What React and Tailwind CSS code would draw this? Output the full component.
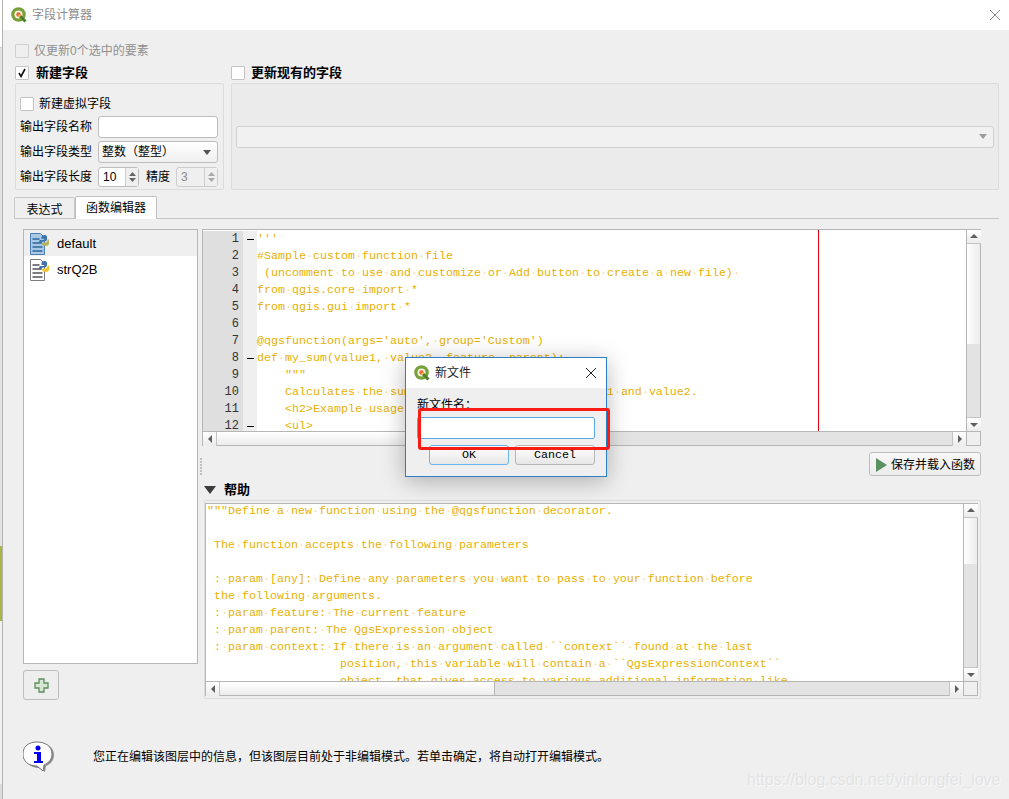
const cjk = '"Liberation Sans", "Noto Sans CJK SC", sans-serif';

const codeLines = [
  "'''",
  '#Sample custom function file',
  ' (uncomment to use and customize or Add button to create a new file) ',
  'from qgis.core import *',
  'from qgis.gui import *',
  '',
  "@qgsfunction(args='auto', group='Custom')",
  'def my_sum(value1, value2, feature, parent):',
  '    """',
  '    Calculates the sum of the two parameters value1 and value2.',
  '    <h2>Example usage:</h2>',
  '    <ul>',
];

const helpLines = [
  '"""Define a new function using the @qgsfunction decorator.',
  '',
  ' The function accepts the following parameters',
  '',
  ' : param [any]: Define any parameters you want to pass to your function before',
  ' the following arguments.',
  ' : param feature: The current feature',
  ' : param parent: The QgsExpression object',
  ' : param context: If there is an argument called ``context`` found at the last',
  '                   position, this variable will contain a ``QgsExpressionContext``',
  '                   object, that gives access to various additional information like',
];

// interior spaces show as faint dots, the editor has "show whitespace" on
function CodeLine({ text }) {
  const lead = text.match(/^ */)[0];
  const words = text.slice(lead.length).split(' ');
  return (
    <div className="h-[17px]">
      {lead}
      {words.map((w, i) => (
        <span key={i}>
          {i > 0 && <span className="text-[#f3dc94]">·</span>}
          {w}
        </span>
      ))}
    </div>
  );
}

function QgisLogo({ size = 16 }) {
  return (
    <svg width={size} height={size} viewBox="0 0 16 16" className="shrink-0">
      <circle cx="7.500" cy="7.500" r="5.700" fill="#f4f1dc" stroke="#76a13a" strokeWidth="3.200" />
      <path d="M9 9l5.500 5.500" stroke="#4f7f2a" strokeWidth="3" />
      <circle cx="7.500" cy="7.500" r="2.200" fill="#e8663a" />
      <circle cx="8.500" cy="8.500" r="1.100" fill="#f4d03f" />
    </svg>
  );
}

function CheckBox({ checked, disabled }) {
  return (
    <span className={`flex h-[14px] w-[14px] shrink-0 items-center justify-center rounded-[1px] border ${disabled ? 'border-[#cfcfcf] bg-[#efefef]' : 'border-[#c4c4c4] bg-white'}`}>
      {checked && (
        <svg width="10" height="10" viewBox="0 0 10 10">
          <path d="M2 5l2 3.500L8 1" fill="none" stroke="#111" strokeWidth="1.600" />
        </svg>
      )}
    </span>
  );
}

function Arrow({ dir, color = '#5f5f5f' }) {
  const paths = {
    up: 'M1 6l4-4 4 4z',
    down: 'M1 3l4 4 4-4z',
    left: 'M7 1L3 5l4 4z',
    right: 'M3 1l4 4-4 4z',
  };
  return (
    <svg width="10" height="10" viewBox="0 0 10 10">
      <path d={paths[dir]} fill={color} />
    </svg>
  );
}

function ScrollBtn({ dir, className = '' }) {
  return (
    <div className={`flex h-[14px] w-[14px] shrink-0 items-center justify-center bg-gradient-to-b from-white to-[#ececec] ${className}`}>
      <Arrow dir={dir} />
    </div>
  );
}

function SpinBox({ value, disabled, width }) {
  return (
    <div className={`flex h-[20px] ${width} items-stretch rounded-[3px] border ${disabled ? 'border-[#cdcdcd] text-[#8a8a8a]' : 'border-[#bdbdbd] bg-white text-black'}`}>
      <span className="flex-1 pl-[4px] text-[12px] leading-[18px]">{value}</span>
      <div className="flex w-[13px] flex-col items-center justify-center border-l border-[#cdcdcd] bg-[#efefef]">
        <svg width="9" height="14" viewBox="0 0 9 14">
          <path d="M1 6l3.500-4L8 6zM1 8l3.500 4L8 8z" fill={disabled ? '#a8a8a8' : '#666'} />
        </svg>
      </div>
    </div>
  );
}

function PyFileIcon({ blue }) {
  const line = blue ? '#4a7fb0' : '#7d7d7d';
  return (
    <svg width="21" height="22" viewBox="0 0 21 22" className="shrink-0">
      <path d="M.5.5h10l4 4v17H.5z" fill={blue ? '#a9c8e6' : '#fff'} stroke={line} />
      <path d="M2.500 6h7M2.500 10h9M2.500 14h10M2.500 18h10" stroke={line} strokeWidth="1.800" />
      <path d="M15 2c-3 0-3.500 1-3.500 3v1H15v1h-4.500C9 7 9 9 9 10.500h2.500C11.500 9 12.500 8.500 14 8.500s3-.5 3-2.500V4C17 3 16 2 15 2z" fill="#3a75ad" />
      <path d="M15.500 13c3 0 3.500-1 3.500-3V6.500h-1.500c0 2.500-1 3-3 3s-2.500.5-2.500 1.500 1.500 2 3.500 2z" fill={blue ? '#b5b45a' : '#f2c431'} />
    </svg>
  );
}

function CodeEditor() {
  return (
    <div className="flex h-[217px] flex-col border border-[#b6b6b6] bg-white">
      <div className="flex h-[201px]">
        <div className="relative flex min-w-0 flex-1 overflow-hidden pt-[1px]">
          <div className="w-[40px] shrink-0 bg-[#dfdfdf] pr-[4px] text-right font-['Liberation_Mono',monospace] text-[12px] leading-[17px] text-[#333]">
            {codeLines.map((_, i) => (
              <div key={i} className="h-[17px]">{i + 1}</div>
            ))}
          </div>
          <div className="w-[14px] shrink-0 bg-[#efefef]">
            {codeLines.map((_, i) => (
              <div key={i} className="flex h-[17px] items-center justify-center">
                {(i === 0 || i === 7 || i === 11) && <span className="h-[1px] w-[7px] bg-black" />}
              </div>
            ))}
          </div>
          <div className="flex-1 whitespace-pre font-['Liberation_Mono',monospace] text-[11.67px] leading-[17px] text-[#e8b000]">
            {codeLines.map((l, i) => (
              <CodeLine key={i} text={l} />
            ))}
          </div>
          {/* long line marker */}
          <div className="absolute top-0 bottom-0 left-[615px] w-[1px] bg-red-600" />
        </div>
        <div className="flex w-[14px] shrink-0 flex-col border-l border-[#b6b6b6]">
          <ScrollBtn dir="up" className="border-b border-[#c4c4c4]" />
          <div className="h-[100px] bg-gradient-to-r from-white to-[#ececec]" />
          <div className="flex-1 bg-[#e3e3e3]" />
          <ScrollBtn dir="down" className="border-t border-[#c4c4c4]" />
        </div>
      </div>
      <div className="flex h-[14px] border-t border-[#b6b6b6]">
        <ScrollBtn dir="left" className="border-r border-[#c4c4c4]" />
        <div className="w-[276px] bg-gradient-to-b from-white to-[#ececec]" />
        <div className="flex-1 bg-[#e3e3e3]" />
        <ScrollBtn dir="right" className="border-l border-[#c4c4c4]" />
        <div className="w-[14px] border-l border-[#b6b6b6] bg-[#efefef]" />
      </div>
    </div>
  );
}

function HelpBox() {
  return (
    <div className="ml-[2px] h-[199px] rounded-[1px] border border-[#dcdcdc] pt-[2px] pr-[2px]">
      <div className="flex h-[193px] flex-col border border-[#b6b6b6] bg-white">
        <div className="flex h-[177px]">
          <div className="min-w-0 flex-1 overflow-hidden whitespace-pre pl-[1px] font-['Liberation_Mono',monospace] text-[11.67px] leading-[17px] text-[#e8b000]">
            <div className="-mt-[1px]">
              {helpLines.map((l, i) => (
                <CodeLine key={i} text={l} />
              ))}
            </div>
          </div>
          <div className="flex w-[14px] shrink-0 flex-col border-l border-[#b6b6b6]">
            <ScrollBtn dir="up" className="border-b border-[#c4c4c4]" />
            <div className="h-[46px] bg-gradient-to-r from-white to-[#ececec]" />
            <div className="flex-1 bg-[#e3e3e3]" />
            <ScrollBtn dir="down" className="border-t border-[#c4c4c4]" />
          </div>
        </div>
        <div className="flex h-[14px] border-t border-[#b6b6b6]">
          <ScrollBtn dir="left" className="border-r border-[#c4c4c4]" />
          <div className="w-[275px] border-r border-[#b6b6b6] bg-gradient-to-b from-white to-[#ececec]" />
          <div className="flex-1 bg-[#e3e3e3]" />
          <ScrollBtn dir="right" className="border-l border-[#c4c4c4]" />
          <div className="w-[14px] border-l border-[#b6b6b6] bg-[#efefef]" />
        </div>
      </div>
    </div>
  );
}

function NewFileDialog() {
  return (
    <div className="absolute top-[357px] left-[405px] h-[120px] w-[202px] border border-[#2b7fc9] bg-[#efefef] shadow-[0_4px_22px_rgba(0,0,0,0.28)]">
      <div className="flex h-[30px] items-center bg-white pr-[9px] pl-[8px]">
        <QgisLogo />
        <span className="ml-[5px] flex-1 text-[12px] text-[#222]">新文件</span>
        <svg width="12" height="12" viewBox="0 0 12 12">
          <path d="M1 1l10 10M11 1L1 11" stroke="#222" strokeWidth="1" />
        </svg>
      </div>
      <div className="px-[11px] pt-[9px]">
        <div className="h-[20px] text-[12px] leading-[16px] text-black">{'新文件名\uFF1A'}</div>
        <div className="h-[22px] w-[178px] rounded-[2px] border border-[#5aa9e6] bg-white" />
        <div className="mt-[6px] flex gap-[6px] pl-[12px] font-['Liberation_Mono',monospace] text-[11.67px] leading-[19px] text-black">
          <div className="h-[20px] w-[80px] rounded-[3px] border border-[#6bb5ee] bg-gradient-to-b from-white to-[#e6e6e6] text-center">OK</div>
          <div className="h-[20px] w-[80px] rounded-[3px] border border-[#b6b6b6] bg-gradient-to-b from-white to-[#e6e6e6] text-center">Cancel</div>
        </div>
      </div>
    </div>
  );
}

export default function App() {
  return (
    <div className="relative flex h-[799px] w-[1009px] overflow-hidden bg-[#efefef] text-[12px] text-black" style={{ fontFamily: cjk }}>
      {/* sliver of the main window behind the dialog */}
      <div className="flex w-[2px] shrink-0 flex-col bg-[#f0f0f0]">
        <div className="h-[48px] border-b border-[#cfcfcf] bg-white" />
        <div className="h-[498px] bg-[#e4e4e4]" />
        <div className="h-[75px] bg-[#a9b544]" />
        <div className="h-[163px]" />
        <div className="flex-1 bg-[#dcdcdc]" />
      </div>

      <div className="flex min-w-0 flex-1 flex-col border-l border-[#b4b4b4]">
        {/* title bar */}
        <div className="flex h-[30px] shrink-0 items-center bg-white pr-[8px] pl-[8px]">
          <QgisLogo />
          <span className="ml-[5px] flex-1 text-[12px] text-[#8c8c8c]">字段计算器</span>
          <svg width="12" height="12" viewBox="0 0 12 12">
            <path d="M1 1l10 10M11 1L1 11" stroke="#8a8a8a" strokeWidth="1" />
          </svg>
        </div>

        <div className="flex flex-1 flex-col pr-[10px] pl-[11px]">
          <div className="flex h-[32px] items-center gap-[5px] pt-[10px] pl-[1px] text-[#8f8f8f]">
            <CheckBox disabled />
            <span>仅更新0个选中的要素</span>
          </div>

          {/* new field / update field */}
          <div className="mt-[1px] flex h-[20px] items-center text-[13px] font-bold">
            <div className="flex w-[217px] items-center gap-[7px] pl-[1px]">
              <CheckBox checked />
              <span>新建字段</span>
            </div>
            <div className="flex items-center gap-[6px]">
              <CheckBox />
              <span>更新现有的字段</span>
            </div>
          </div>
          <div className="flex h-[107px] gap-[7px] pl-[1px]">
            <div className="flex w-[209px] flex-col rounded-[2px] border border-[#dcdcdc] px-[4px] pt-[12px]">
              <div className="flex h-[16px] items-center gap-[5px]">
                <CheckBox />
                <span>新建虚拟字段</span>
              </div>
              <div className="mt-[4px] flex h-[22px] items-center justify-between pr-[1px]">
                <span>输出字段名称</span>
                <div className="h-[22px] w-[120px] rounded-[3px] border border-[#bdbdbd] bg-white" />
              </div>
              <div className="mt-[3px] flex h-[22px] items-center justify-between pr-[1px]">
                <span>输出字段类型</span>
                <div className="flex h-[22px] w-[120px] items-center justify-between rounded-[3px] border border-[#bdbdbd] bg-gradient-to-b from-white to-[#f0f0f0] pr-[6px] pl-[3px]">
                  <span>{'整数\uFF08整型\uFF09'}</span>
                  <svg width="8" height="5" viewBox="0 0 8 5"><path d="M0 0h8L4 5z" fill="#555" /></svg>
                </div>
              </div>
              <div className="mt-[4px] flex h-[20px] items-center pr-[1px]">
                <span className="w-[78px]">输出字段长度</span>
                <SpinBox value="10" width="w-[41px]" />
                <span className="ml-[7px] w-[30px]">精度</span>
                <SpinBox value="3" disabled width="w-[42px]" />
              </div>
            </div>
            <div className="flex flex-1 items-center rounded-[2px] border border-[#dcdcdc] bg-[#ebebeb] px-[4px]">
              <div className="flex h-[22px] w-full items-center justify-end rounded-[3px] border border-[#d0d0d0] bg-[#f1f1f1] pr-[6px]">
                <svg width="8" height="5" viewBox="0 0 8 5"><path d="M0 0h8L4 5z" fill="#9a9a9a" /></svg>
              </div>
            </div>
          </div>

          {/* tabs */}
          <div className="mt-[6px] flex h-[23px] items-end border-b border-[#c4c4c4]">
            <div className="h-[21px] w-[61px] rounded-t-[2px] border border-b-0 border-[#c8c8c8] bg-[#efefef] text-center leading-[24px]">表达式</div>
            <div className="relative top-[1px] h-[23px] w-[82px] rounded-t-[2px] border border-b-0 border-[#c0c0c0] bg-white text-center leading-[22px]">函数编辑器</div>
          </div>

          {/* function editor page */}
          <div className="mt-[10px] flex gap-[4px] pl-[9px]">
            <div className="flex w-[175px] flex-col">
              <div className="h-[435px] border border-[#b6b6b6] bg-white text-[13px]">
                <div className="flex h-[26px] items-center gap-[6px] bg-[#efefef] pt-[1px] pl-[6px]">
                  <PyFileIcon blue />
                  <span>default</span>
                </div>
                <div className="flex h-[26px] items-center gap-[6px] pt-[1px] pl-[6px]">
                  <PyFileIcon />
                  <span>strQ2B</span>
                </div>
              </div>
              <div className="mt-[6px] flex h-[30px] w-[36px] items-center justify-center rounded-[3px] border border-[#bdbdbd] bg-[#eeeeee]">
                <svg width="15" height="15" viewBox="0 0 15 15">
                  <path d="M5 1h5v4h4v5h-4v4H5v-4H1V5h4z" fill="#d6e6d2" stroke="#5b8f5e" strokeWidth="1.300" />
                </svg>
              </div>
            </div>

            <div className="flex w-[779px] flex-col">
              <CodeEditor />
              <div className="mt-[6px] flex h-[24px] justify-end">
                <div className="flex h-[24px] w-[112px] items-center gap-[4px] rounded-[3px] border border-[#bdbdbd] bg-gradient-to-b from-[#f7f7f7] to-[#ececec] pt-[1px] pl-[6px]">
                  <svg width="11" height="14" viewBox="0 0 11 14"><path d="M0 0l11 7-11 7z" fill="#5a9160" /></svg>
                  <span>保存并载入函数</span>
                </div>
              </div>
              <div className="flex h-[24px] items-center gap-[8px] pt-[4px] pl-[2px] text-[13px] font-bold">
                <svg width="12" height="8" viewBox="0 0 12 8"><path d="M0 0h12L6 8z" fill="#3c3c3c" /></svg>
                <span>帮助</span>
              </div>
              <HelpBox />
            </div>
          </div>

          {/* info line */}
          <div className="mt-[40px] flex h-[34px] items-center pl-[9px]">
            <svg width="32" height="33" viewBox="0 0 32 33" className="shrink-0">
              <path d="M16 2c8 0 15 4 15 12 0 5-3 9-8 11l-1 6-6-4C7 27 2 21 2 14 2 6 8 2 16 2z" fill="#8f8f8f" />
              <path d="M14 1c8 0 15 4 15 12 0 5-3 9-8 11l-1 6-6-5C5 25 0 20 0 13 0 5 6 1 14 1z" fill="#fff" stroke="#777" />
              <circle cx="15" cy="7" r="2.500" fill="#0000ee" />
              <path d="M11 11h7v9h2v2H11v-2h3v-7h-3z" fill="#0000ee" />
            </svg>
            <span className="ml-[38px]">{'您正在编辑该图层中的信息\uFF0C但该图层目前处于非编辑模式。若单击确定\uFF0C将自动打开编辑模式。'}</span>
          </div>
        </div>
      </div>

      {/* splitter grip */}
      <div className="absolute top-[458px] left-[200px] flex flex-col gap-[1px]">
        {[0, 1, 2, 3, 4, 5].map((i) => (
          <span key={i} className="h-[2px] w-[2px] bg-[#c0c0c0]" />
        ))}
      </div>

      <NewFileDialog />

      {/* annotation drawn on the screenshot */}
      <div className="absolute top-[408px] left-[418px] h-[42px] w-[192px] rounded-[3px] border-[3px] border-[#f81c14]" />

      <div className="absolute top-[769px] left-[747px] whitespace-nowrap font-['Liberation_Sans',sans-serif] text-[16px] leading-[22px] text-[#e3e3e3] [text-shadow:1px_1px_1px_#fafafa]">
        https://blog.csdn.net/yinlongfei_love
      </div>
    </div>
  );
}
